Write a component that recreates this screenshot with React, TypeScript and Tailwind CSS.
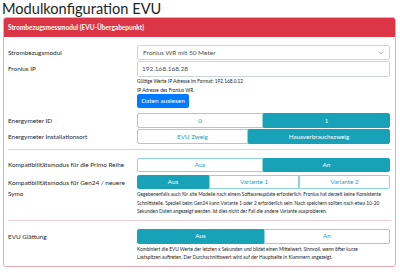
import { ChevronDown } from 'lucide-react';

const label = "text-[6.4px] leading-[10px] text-[#212529] whitespace-nowrap";
const help = "text-[4.8px] leading-[8.5px] text-[#212529] whitespace-nowrap";

type Opt = { text: string; on: boolean; w: string };

function Toggle({ opts, h = 'h-[15px]' }: { opts: Opt[]; h?: string }) {
  return (
    <div className={`flex w-[253px] ${h}`}>
      {opts.map((o, i) => (
        <div
          key={i}
          className={`${o.w} flex items-center justify-center text-[6.3px] border ${
            o.on ? 'bg-[#17a2b8] border-[#17a2b8] text-white' : 'bg-white border-[#8fd3de] text-[#17a2b8]'
          } ${i === 0 ? 'rounded-l-[2px]' : ''} ${i === opts.length - 1 ? 'rounded-r-[2px]' : ''}`}
        >
          {o.text}
        </div>
      ))}
    </div>
  );
}

function Row({ title, children, top = 'items-center' }: { title: React.ReactNode; children: React.ReactNode; top?: string }) {
  return (
    <div className={`flex ${top}`}>
      <div className={`w-[129px] ${label}`}>{title}</div>
      <div className="flex flex-col">{children}</div>
    </div>
  );
}

export default function App() {
  return (
    <div className="w-[400px] h-[274px] overflow-hidden bg-white font-['Lato',sans-serif] text-[#212529]">
      <h1 className="h-[17px] text-[14.6px] leading-[17px] pl-[2px] font-normal">Modulkonfiguration EVU</h1>

      <div className="mx-[3px] w-[393px] border border-[#e9aab2] rounded-[3px] overflow-hidden">
        <div className="h-[19px] bg-[#dc3545] text-white font-bold text-[6.5px] px-[4px] flex items-center">
          Strombezugsmessmodul (EVU-Übergabepunkt)
        </div>

        <div className="px-[4px] pt-[8px] pb-[4px] flex flex-col">
          <Row title="Strombezugsmodul">
            <div className="w-[253px] h-[15px] border border-[#ced4da] rounded-[2px] flex items-center justify-between px-[5px] text-[6.5px] text-[#495057]">
              <span>Fronius WR mit 50 Meter</span>
              <ChevronDown className="w-[6px] h-[6px] text-[#343a40]" strokeWidth={2} />
            </div>
          </Row>

          <div className="mt-[1px]">
            <Row title={<span className="block pt-[3px]">Fronius IP</span>} top="items-start">
              <div className="w-[253px] h-[16px] border border-[#ced4da] rounded-[2px] flex items-center px-[4px] text-[6.5px] text-[#495057]">
                192.168.168.28
              </div>
              <div className={help}>Gültige Werte IP Adresse im Format: 192.168.0.12</div>
              <div className={help}>IP Adresse des Fronius WR.</div>
              <div className="w-[52px] h-[14px] bg-[#007bff] rounded-[2px] text-white text-[6.5px] flex items-center justify-center">
                Daten auslesen
              </div>
            </Row>
          </div>

          <div className="mt-[5px]">
            <Row title="Energymeter ID">
              <Toggle opts={[{ text: '0', on: false, w: 'w-[126px]' }, { text: '1', on: true, w: 'w-[127px]' }]} />
            </Row>
          </div>
          <div className="mt-[1px]">
            <Row title="Energymeter Installationsort">
              <Toggle opts={[{ text: 'EVU Zweig', on: false, w: 'w-[111px]' }, { text: 'Hausverbrauchszweig', on: true, w: 'w-[142px]' }]} />
            </Row>
          </div>

          <div className="mt-[5px] mb-[8px] border-t border-[#e6cdd0]" />

          <Row title="Kompatibilitätsmodus für die Primo Reihe">
            <Toggle h="h-[14px]" opts={[{ text: 'Aus', on: false, w: 'w-[126px]' }, { text: 'An', on: true, w: 'w-[127px]' }]} />
          </Row>
          <div className="mt-[3px]">
            <Row title={<span className="block pt-[2px] leading-[11px]">Kompatibilitätsmodus für Gen24 / neuere<br />Symo</span>} top="items-start">
              <Toggle h="h-[14px]" opts={[{ text: 'Aus', on: true, w: 'w-[72px]' }, { text: 'Variante 1', on: false, w: 'w-[90px]' }, { text: 'Variante 2', on: false, w: 'w-[91px]' }]} />
              <div className={`${help} mt-[1px]`}>Gegebenenfalls auch für alte Modelle nach einem Softwareupdate erforderlich. Fronius hat derzeit keine Konsistente</div>
              <div className={help}>Schnittstelle. Speziell beim Gen24 kann Variante 1 oder 2 erforderlich sein. Nach speichern sollten nach etwa 10-20</div>
              <div className={help}>Sekunden Daten angezeigt werden. Ist dies nicht der Fall die andere Variante ausprobieren.</div>
            </Row>
          </div>

          <div className="mt-[4px] mb-[8px] border-t border-[#e6cdd0]" />

          <Row title={<span className="block pt-[3px]">EVU Glättung</span>} top="items-start">
            <Toggle opts={[{ text: 'Aus', on: true, w: 'w-[127px]' }, { text: 'An', on: false, w: 'w-[126px]' }]} />
            <div className={`${help} mt-[1px]`}>Kombiniert die EVU Werte der letzten x Sekunden und bildet einen Mittelwert. Sinnvoll, wenn öfter kurze</div>
            <div className={help}>Lastspitzen auftreten. Der Durchschnittswert wird auf der Hauptseite in Klammern angezeigt.</div>
          </Row>
        </div>
      </div>
    </div>
  );
}
